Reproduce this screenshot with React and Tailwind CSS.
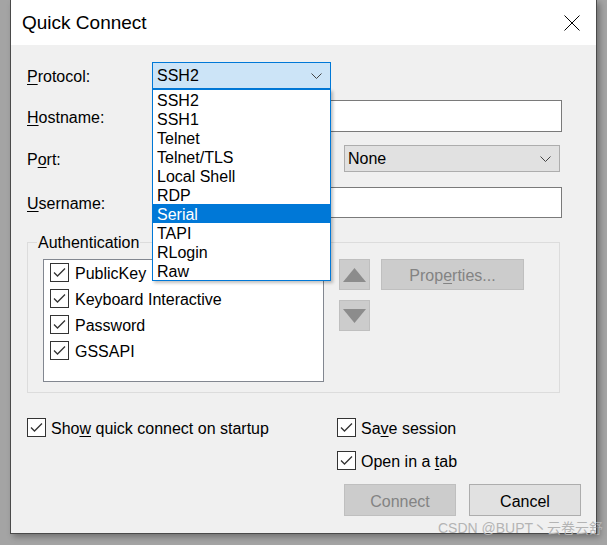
import React from "react";

const protocols = ["SSH2", "SSH1", "Telnet", "Telnet/TLS", "Local Shell", "RDP", "Serial", "TAPI", "RLogin", "Raw"];

function Check() {
  return (
    <span className="w-[19px] h-[19px] border border-[#333333] bg-white flex shrink-0">
      <svg width="17" height="17" viewBox="0 0 17 17">
        <path d="M3 8.5 L6.5 12 L14 4.5" fill="none" stroke="#333333" strokeWidth="1.3" />
      </svg>
    </span>
  );
}

function Chevron() {
  return (
    <svg width="11" height="6" viewBox="0 0 11 6">
      <path d="M0.5 0.5 L5.5 5.5 L10.5 0.5" fill="none" stroke="#444444" strokeWidth="1" />
    </svg>
  );
}

export default function App() {
  return (
    <div className="w-[607px] h-[545px] bg-[#a4a4a4] overflow-hidden font-['Liberation_Sans',Arial,sans-serif] text-[16px] text-black">
      <div className="relative ml-[10px] w-[587px] h-[534px] border-x border-b border-[#4a4a4a] bg-[#f0f0f0] shadow-[3px_3px_6px_rgba(0,0,0,0.3)] flex flex-col">
        {/* Title bar */}
        <div className="h-[45px] bg-white flex items-center justify-between pl-[11px] pr-[16px] shrink-0">
          <span className="text-[19px] leading-none">Quick Connect</span>
          <svg width="16" height="16" viewBox="0 0 16 16">
            <path d="M0.5 0.5 L15.5 15.5 M15.5 0.5 L0.5 15.5" stroke="#000" strokeWidth="1" />
          </svg>
        </div>

        {/* Fields */}
        <div className="pt-[17px] pl-[16px] pr-[34px] leading-[20px]">
          <div className="flex items-center h-[27px]">
            <span className="w-[125px] pt-[2px]"><u className="underline-offset-2">P</u>rotocol:</span>
            <div className="w-[179px] h-[27px] bg-[#cce4f7] border border-[#0078d7] flex items-center justify-between pl-[4px] pr-[8px]">
              <span className="pt-[1px]">SSH2</span>
              <Chevron />
            </div>
          </div>
          <div className="flex items-center h-[32px] mt-[11px]">
            <span className="w-[125px] pt-[3px]"><u className="underline-offset-2">H</u>ostname:</span>
            <div className="flex-1 h-[32px] bg-white border border-[#7a7a7a]" />
          </div>
          <div className="flex items-center h-[31px] mt-[11px]">
            <span className="w-[125px] pt-[3px]">P<u className="underline-offset-2">o</u>rt:</span>
            <div className="w-[179px] h-[31px] bg-white border border-[#7a7a7a]" />
            <div className="ml-auto mr-[2px] w-[216px] h-[27px] bg-[#e1e1e1] border border-[#adadad] flex items-center justify-between pl-[3px] pr-[8px]">
              <span className="pt-[1px]">None</span>
              <Chevron />
            </div>
          </div>
          <div className="flex items-center h-[31px] mt-[13px]">
            <span className="w-[125px] pt-[2px]"><u className="underline-offset-2">U</u>sername:</span>
            <div className="flex-1 h-[31px] bg-white border border-[#7a7a7a]" />
          </div>
        </div>

        {/* Authentication */}
        <fieldset className="ml-[16px] mt-[12px] w-[533px] border border-[#dcdcdc] pl-[15px] pb-[10px] leading-[20px]">
          <legend className="ml-[-6px] px-[1px] h-[24px] leading-[26px]">Authentication</legend>
          <div className="flex items-start mt-[5px]">
            <div className="w-[281px] h-[123px] bg-white border border-[#828790] pt-[3px] pl-[6px] flex flex-col gap-[7px]">
              {["PublicKey", "Keyboard Interactive", "Password", "GSSAPI"].map((t) => (
                <div key={t} className="flex items-center gap-[6px] h-[19px]">
                  <Check />
                  <span className="pt-[3px]">{t}</span>
                </div>
              ))}
            </div>
            <div className="ml-[15px] flex flex-col gap-[10px]">
              <div className="w-[31px] h-[31px] bg-[#cccccc] border border-[#bfbfbf] flex items-center justify-center">
                <svg width="23" height="14" viewBox="0 0 23 14"><path d="M11.5 0 L23 14 L0 14 Z" fill="#8c8c8c" /></svg>
              </div>
              <div className="w-[31px] h-[31px] bg-[#cccccc] border border-[#bfbfbf] flex items-center justify-center">
                <svg width="23" height="14" viewBox="0 0 23 14"><path d="M0 0 L23 0 L11.5 14 Z" fill="#8c8c8c" /></svg>
              </div>
            </div>
            <div className="ml-[11px] w-[143px] h-[31px] bg-[#cccccc] border border-[#bfbfbf] flex items-center justify-center text-[#838383]">
              <span className="pt-[3px]">Prop<u className="underline-offset-2">e</u>rties...</span>
            </div>
          </div>
        </fieldset>

        {/* Options */}
        <div className="flex mt-[25px] pl-[16px] leading-[20px]">
          <div className="w-[310px] flex items-center gap-[5px] h-[19px]">
            <Check />
            <span className="pt-[2px]">Sho<u className="underline-offset-2">w</u> quick connect on startup</span>
          </div>
          <div className="flex flex-col gap-[14px]">
            <div className="flex items-center gap-[5px] h-[19px]">
              <Check />
              <span className="pt-[2px]">Sa<u className="underline-offset-2">v</u>e session</span>
            </div>
            <div className="flex items-center gap-[5px] h-[19px]">
              <Check />
              <span className="pt-[2px]">Open in a <u className="underline-offset-2">t</u>ab</span>
            </div>
          </div>
        </div>

        <div className="flex justify-end gap-[13px] mt-[14px] pr-[15px] leading-[20px]">
          <div className="w-[112px] h-[32px] bg-[#cccccc] border border-[#bfbfbf] flex items-center justify-center pt-[3px] text-[#838383]">Connect</div>
          <div className="w-[112px] h-[32px] bg-[#e1e1e1] border border-[#adadad] flex items-center justify-center pt-[3px]">Cancel</div>
        </div>

        {/* Open protocol list */}
        <div className="absolute left-[141px] top-[89px] w-[179px] h-[192px] bg-white border border-[#0078d7] shadow-[2px_2px_3px_rgba(0,0,0,0.25)] leading-[21px]">
          {protocols.map((p) => (
            <div key={p} className={p === "Serial" ? "h-[19px] pl-[4px] bg-[#0078d7] text-white" : "h-[19px] pl-[4px]"}>
              {p}
            </div>
          ))}
        </div>

        {/* Watermark */}
        <span className="absolute left-[427px] top-[519px] whitespace-nowrap text-[14px] leading-[18px] text-[#b4b4b4] font-['Liberation_Sans','Noto_Sans_CJK_SC',sans-serif]">
          CSDN @BUPT丶云卷云舒
        </span>
      </div>
    </div>
  );
}
